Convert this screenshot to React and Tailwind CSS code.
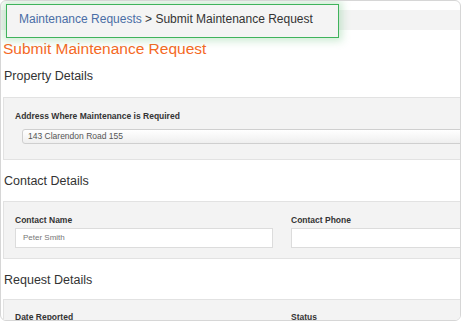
import React from "react";

const font = { fontFamily: '"Liberation Sans", Arial, sans-serif' };

function Heading({ children, className = "" }) {
  return (
    <h2 className={`pl-[3px] text-[12.5px] leading-[15px] text-[#333] font-normal ${className}`}>
      {children}
    </h2>
  );
}

function Label({ children }) {
  return <div className="text-[8.5px] leading-[10px] font-bold text-[#333]">{children}</div>;
}

export default function App() {
  return (
    <div className="w-[462px] h-[322px] bg-white" style={font}>
      <div className="relative w-[461px] h-[321px] border border-[#d6d6d6] rounded-[6px] overflow-hidden bg-white">
        <div className="mt-[9px] h-[20px] bg-[#f3f3f3]" />

        <h1 className="mt-[10px] pl-[2px] text-[15.5px] leading-[18px] text-[#f5691f] font-normal">
          Submit Maintenance Request
        </h1>

        <Heading className="mt-[11px]">Property Details</Heading>
        <div className="mt-[13px] ml-[2px] w-[560px] border border-[#e2e2e2] bg-[#f3f3f3] pt-[13px] pb-[15px] pl-[11px]">
          <Label>Address Where Maintenance is Required</Label>
          <div className="mt-[8px] ml-[7px] h-[15px] border border-[#cfcfcf] rounded-[3px] bg-linear-to-b from-white to-[#efefef] pl-[5px] text-[8.5px] leading-[13px] text-[#555]">
            143 Clarendon Road 155
          </div>
        </div>

        <Heading className="mt-[14px]">Contact Details</Heading>
        <div className="mt-[12px] ml-[2px] w-[560px] border border-[#e2e2e2] bg-[#f3f3f3] pt-[13px] pb-[10px] pl-[11px] flex gap-[18px]">
          <div className="w-[258px]">
            <Label>Contact Name</Label>
            <div className="mt-[3px] h-[20px] border border-[#dcdcdc] bg-white pl-[7px] text-[8px] leading-[18px] text-[#777]">
              Peter Smith
            </div>
          </div>
          <div className="w-[258px]">
            <Label>Contact Phone</Label>
            <div className="mt-[3px] h-[20px] border border-[#dcdcdc] bg-white" />
          </div>
        </div>

        <Heading className="mt-[14px]">Request Details</Heading>
        <div className="mt-[11px] ml-[2px] w-[560px] h-[60px] border border-[#e2e2e2] bg-[#f3f3f3] pt-[12px] pl-[11px] flex gap-[18px]">
          <div className="w-[258px]">
            <Label>Date Reported</Label>
          </div>
          <div className="w-[258px]">
            <Label>Status</Label>
          </div>
        </div>

        <div className="absolute left-[5px] top-[3px] w-[333px] h-[34px] border border-[#3fb35c] bg-[#f4f4f4] shadow-[0_0_8px_3px_rgba(90,190,110,0.3)] pt-[7px] pl-[12px] text-[12px] leading-[14px]">
          <span className="text-[#4a6ea6]">Maintenance Requests</span>
          <span className="text-[#333]"> &gt; Submit Maintenance Request</span>
        </div>
      </div>
    </div>
  );
}
